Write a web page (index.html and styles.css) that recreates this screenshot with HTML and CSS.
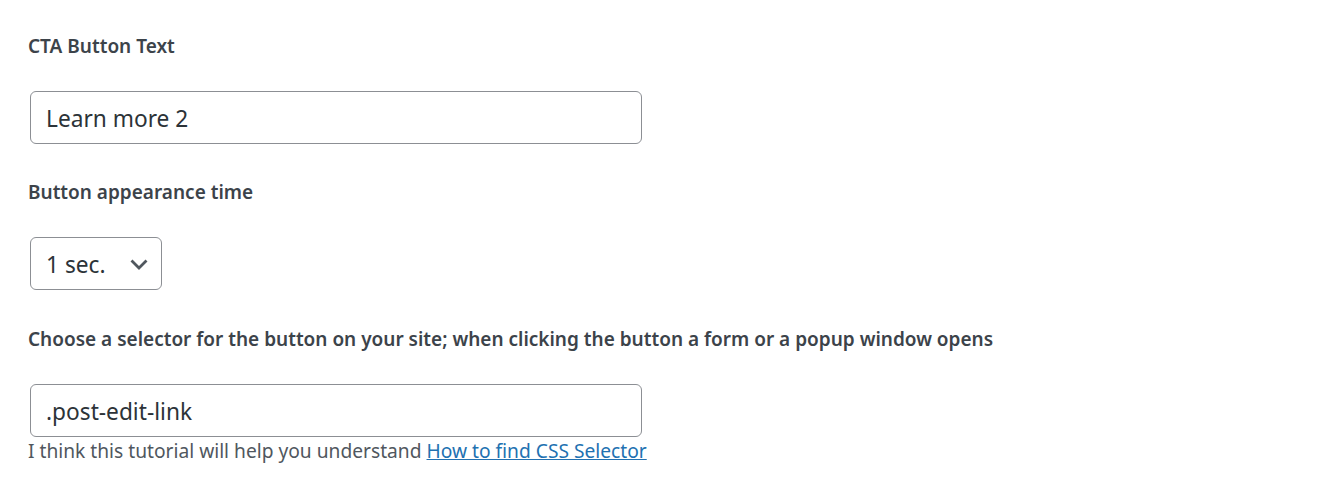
FILE: index.html
```html
<!DOCTYPE html>
<html lang="en">
<head>
<meta charset="utf-8">
<title>CTA settings</title>
<link rel="stylesheet" href="styles.css">
</head>
<body>
<div class="form">
  <div class="field">
    <label class="label" for="cta-text">CTA Button Text</label>
    <input class="input text-input" id="cta-text" type="text" value="Learn more 2">
  </div>
  <div class="field">
    <label class="label" for="cta-time">Button appearance time</label>
    <div class="select">
      <span class="select-value">1 sec.</span>
      <svg class="chevron" width="18" height="11" viewBox="0 0 18 11"><path d="M1.5 1.5 L9 9 L16.5 1.5" fill="none" stroke="#50575e" stroke-width="2.8"/></svg>
    </div>
  </div>
  <div class="field field-last">
    <label class="label" for="cta-sel">Choose a selector for the button on your site; when clicking the button a form or a popup window opens</label>
    <input class="input text-input" id="cta-sel" type="text" value=".post-edit-link">
    <p class="help">I think this tutorial will help you understand <a href="#">How to find CSS Selector</a></p>
  </div>
</div>
</body>
</html>
```

FILE: styles.css
```css
html, body {
  margin: 0;
  padding: 0;
  background: #ffffff;
}
body {
  font-family: "Noto Sans", "Open Sans", sans-serif;
  color: #3c434a;
}
.form {
  padding: 32px 28px 0 28px;
  display: flex;
  flex-direction: column;
  gap: 34px;
}
.field {
  display: flex;
  flex-direction: column;
  align-items: flex-start;
}
.field-last {
  margin-top: 1px;
}
.label {
  font-size: 19px;
  font-weight: 600;
  line-height: 28px;
  color: #3c434a;
  margin-bottom: 31px;
  white-space: nowrap;
}
.input {
  box-sizing: border-box;
  margin: 0 0 0 2px;
  border: 1px solid #8c8f94;
  border-radius: 6px;
  background: #fff;
  height: 53px;
  font-family: inherit;
  color: #2c3338;
}
.text-input {
  width: 612px;
  padding: 2px 15px 0 15px;
  font-size: 22.7px;
  outline: none;
}
.select {
  box-sizing: border-box;
  margin-left: 2px;
  width: 132px;
  height: 53px;
  border: 1px solid #8c8f94;
  border-radius: 6px;
  display: flex;
  align-items: center;
  justify-content: space-between;
  padding: 2px 13px 0 15px;
  font-size: 22.7px;
  color: #2c3338;
}
.chevron {
  display: block;
  margin-top: -1px;
}
.help {
  margin: 1px 0 0 0;
  font-size: 19.2px;
  line-height: 26px;
  color: #50575e;
  white-space: nowrap;
}
.help a {
  color: #2271b1;
  text-decoration: underline;
}
```
